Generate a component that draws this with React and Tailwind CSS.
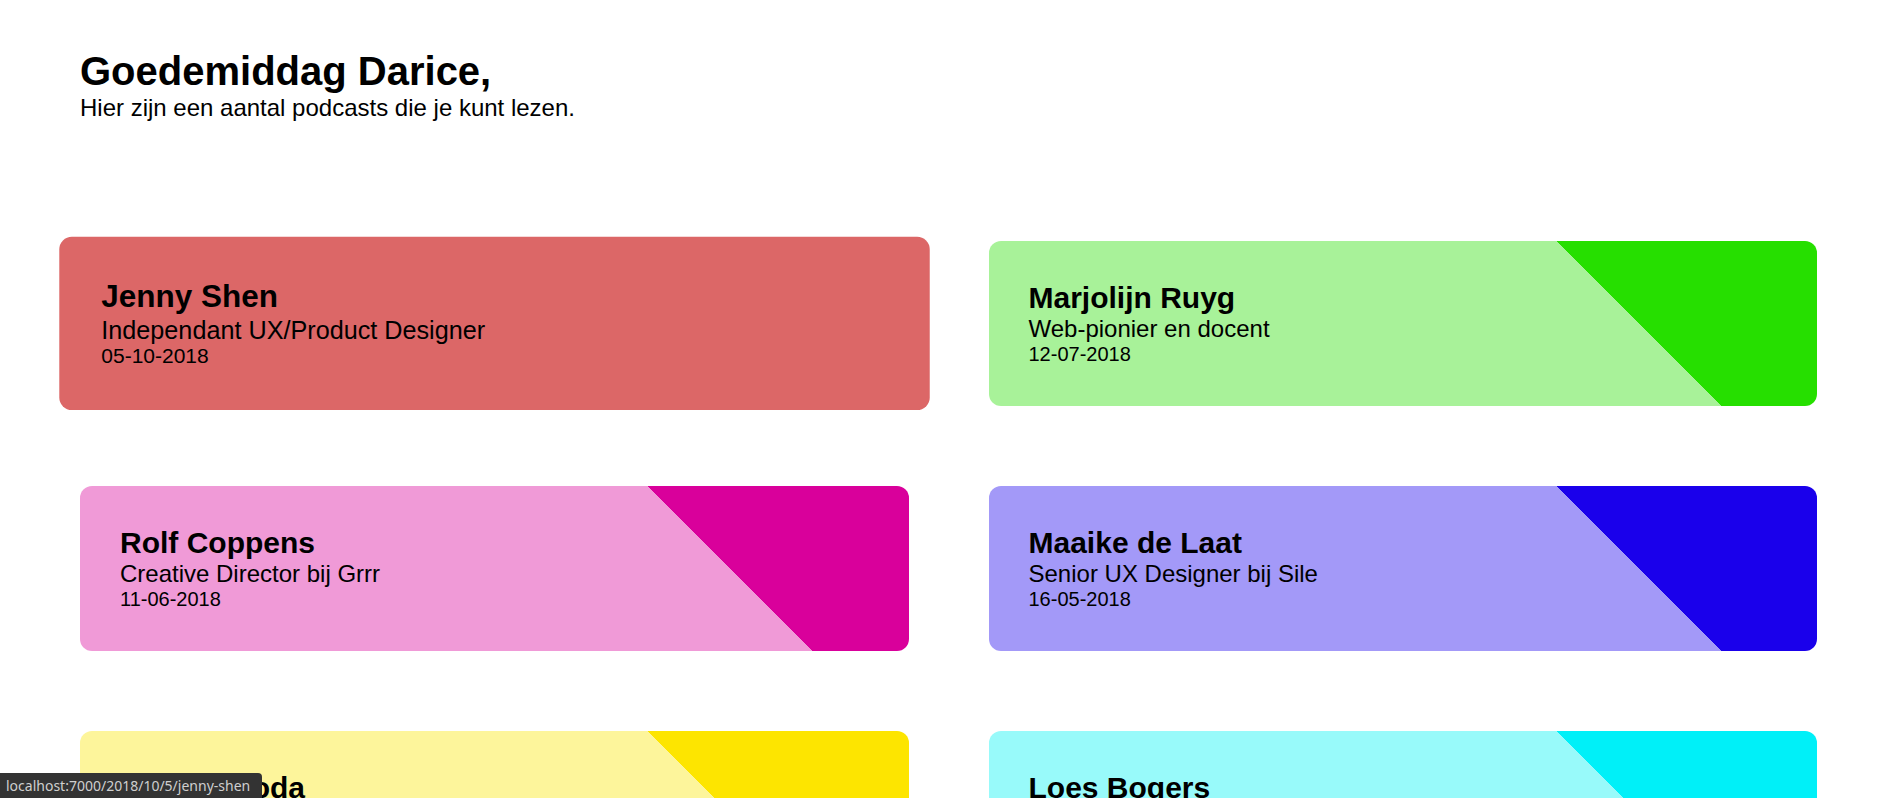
import React from 'react';

const podcasts = [
    { name: "Jenny Shen", role: "Independant UX/Product Designer", date: "05-10-2018", bg: "bg-[#dc6767]", active: true },
    { name: "Marjolijn Ruyg", role: "Web-pionier en docent", date: "12-07-2018", bg: "bg-[linear-gradient(45deg,#a8f299_518px,#26df00_518px)]" },
    { name: "Rolf Coppens", role: "Creative Director bij Grrr", date: "11-06-2018", bg: "bg-[linear-gradient(45deg,#f09ad7_518px,#d9009b_518px)]" },
    { name: "Maaike de Laat", role: "Senior UX Designer bij Sile", date: "16-05-2018", bg: "bg-[linear-gradient(45deg,#a399f8_518px,#1a00eb_518px)]" },
    { name: "Sanne Broda", role: "Interaction Designer", date: "02-05-2018", bg: "bg-[linear-gradient(45deg,#fdf59b_518px,#fde500_518px)]" },
    { name: "Loes Bogers", role: "Docent en onderzoeker", date: "18-04-2018", bg: "bg-[linear-gradient(45deg,#98fafa_518px,#00f0f8_518px)]" },
];

const PodcastCard = ({ name, role, date, bg, active }) => (
    <a
        href="#"
        className={`block rounded-[12px] p-[40px] text-black ${bg} ${active ? "scale-105" : ""}`}
    >
        <h2 className="text-[30px] font-bold leading-[1.15]">{name}</h2>
        <p className="text-[24px] leading-[1.15]">{role}</p>
        <p className="text-[20px] leading-[1.15]">{date}</p>
    </a>
);

export default function App() {
    return (
        <div className="min-h-screen bg-white text-black font-['Liberation_Sans',Arial,sans-serif]">
            <header className="pt-[48px] px-[80px]">
                <h1 className="text-[40px] font-bold leading-[1.15]">Goedemiddag Darice,</h1>
                <p className="text-[24px] leading-[1.15]">Hier zijn een aantal podcasts die je kunt lezen.</p>
            </header>

            <main className="grid grid-cols-2 gap-[80px] px-[80px] pt-[119px] pb-[80px]">
                {podcasts.map((p) => (
                    <PodcastCard key={p.name} {...p} />
                ))}
            </main>

            {/* browser status bubble */}
            <div className="fixed bottom-0 left-0 h-[25px] w-[262px] flex items-center px-[6px] bg-[#333333] rounded-tr-[4px] text-[#cfcfcf] text-[14px] whitespace-nowrap overflow-hidden font-['Noto_Sans',sans-serif]">
                localhost:7000/2018/10/5/jenny-shen
            </div>
        </div>
    );
}
